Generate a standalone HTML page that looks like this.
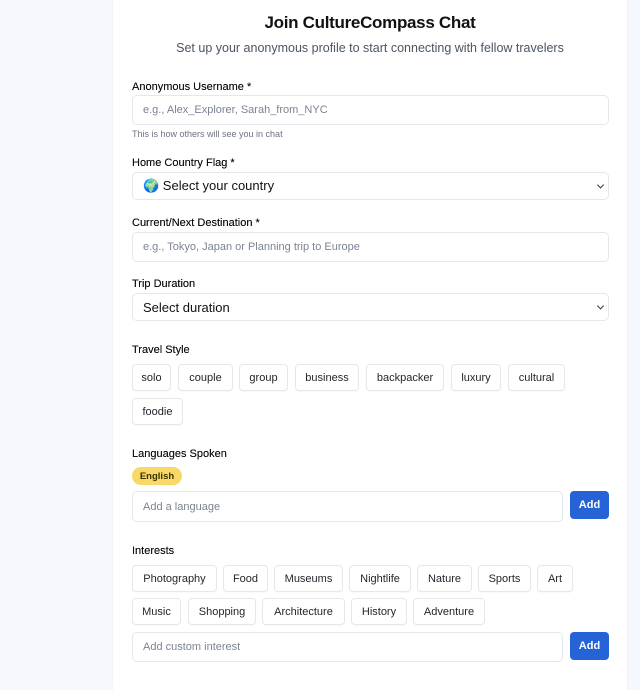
<!DOCTYPE html>
<html><head><style>
*{box-sizing:border-box;margin:0;padding:0}
body{width:640px;height:677px;overflow:hidden;background:#f5f8fc;font-family:"Liberation Sans",sans-serif;position:relative;color:#111}
.card{position:absolute;left:113px;top:-10px;width:514px;height:700px;background:#fff;box-shadow:0 0 3px rgba(0,0,0,.05)}
.a{position:absolute}
.t{left:113px;width:514px;text-align:center}
.lbl{left:132px;font-size:11px;color:#111;text-shadow:0 0 .3px #111}
.in{left:132px;width:477px;border:1px solid #e5e7eb;border-radius:5px;background:#fff;font-size:11px;color:#7b8494;padding-left:10px;display:flex;align-items:center}
.sel{color:#111;font-size:13px}
.sel:after{content:"";position:absolute;right:5px;top:50%;width:4px;height:4px;border-right:1.5px solid #333;border-bottom:1.5px solid #333;transform:translateY(-70%) rotate(45deg)}
.chip{position:absolute;height:27px;border:1px solid #e5e7eb;border-radius:4px;font-size:11px;color:#1f2328;display:flex;align-items:center;justify-content:center;box-shadow:0 1px 1px rgba(0,0,0,.03)}
.btn{position:absolute;left:570px;width:39px;height:28px;background:#2563d6;color:#fff;border-radius:4px;font-size:11px;font-weight:bold;display:flex;align-items:center;justify-content:center}
</style></head><body>
<div class="card"></div>
<div class="a t" style="top:13px;font-size:17px;font-weight:bold;letter-spacing:-.3px">Join CultureCompass Chat</div>
<div class="a t" style="top:41px;font-size:12.5px;color:#4b5563">Set up your anonymous profile to start connecting with fellow travelers</div>

<div class="a lbl" style="top:81px">Anonymous Username *</div>
<div class="a in" style="top:95px;height:30px">e.g., Alex_Explorer, Sarah_from_NYC</div>
<div class="a" style="left:132px;top:129px;font-size:9px;color:#6b7280">This is how others will see you in chat</div>

<div class="a lbl" style="top:157px">Home Country Flag *</div>
<div class="a in sel" style="top:172px;height:28px">🌍 Select your country</div>

<div class="a lbl" style="top:217px">Current/Next Destination *</div>
<div class="a in" style="top:232px;height:30px">e.g., Tokyo, Japan or Planning trip to Europe</div>

<div class="a lbl" style="top:278px">Trip Duration</div>
<div class="a in sel" style="top:293px;height:28px">Select duration</div>

<div class="a lbl" style="top:344px">Travel Style</div>
<div class="chip" style="left:132px;top:364px;width:39px">solo</div>
<div class="chip" style="left:178px;top:364px;width:55px">couple</div>
<div class="chip" style="left:239px;top:364px;width:49px">group</div>
<div class="chip" style="left:295px;top:364px;width:64px">business</div>
<div class="chip" style="left:366px;top:364px;width:78px">backpacker</div>
<div class="chip" style="left:451px;top:364px;width:50px">luxury</div>
<div class="chip" style="left:508px;top:364px;width:57px">cultural</div>
<div class="chip" style="left:132px;top:398px;width:51px">foodie</div>

<div class="a lbl" style="top:448px">Languages Spoken</div>
<div class="a" style="left:132px;top:467px;width:50px;height:18px;border-radius:9px;background:#f8d867;font-size:9.5px;font-weight:bold;color:#3b3200;display:flex;align-items:center;justify-content:center">English</div>
<div class="a in" style="top:491px;height:31px;width:431px">Add a language</div>
<div class="btn" style="top:491px">Add</div>

<div class="a lbl" style="top:545px">Interests</div>
<div class="chip" style="left:132px;top:565px;width:85px">Photography</div>
<div class="chip" style="left:223px;top:565px;width:45px">Food</div>
<div class="chip" style="left:274px;top:565px;width:69px">Museums</div>
<div class="chip" style="left:349px;top:565px;width:62px">Nightlife</div>
<div class="chip" style="left:417px;top:565px;width:55px">Nature</div>
<div class="chip" style="left:478px;top:565px;width:53px">Sports</div>
<div class="chip" style="left:537px;top:565px;width:36px">Art</div>
<div class="chip" style="left:132px;top:598px;width:49px">Music</div>
<div class="chip" style="left:188px;top:598px;width:68px">Shopping</div>
<div class="chip" style="left:262px;top:598px;width:83px">Architecture</div>
<div class="chip" style="left:351px;top:598px;width:56px">History</div>
<div class="chip" style="left:413px;top:598px;width:72px">Adventure</div>
<div class="a in" style="top:632px;height:30px;width:431px">Add custom interest</div>
<div class="btn" style="top:632px">Add</div>
</body></html>
